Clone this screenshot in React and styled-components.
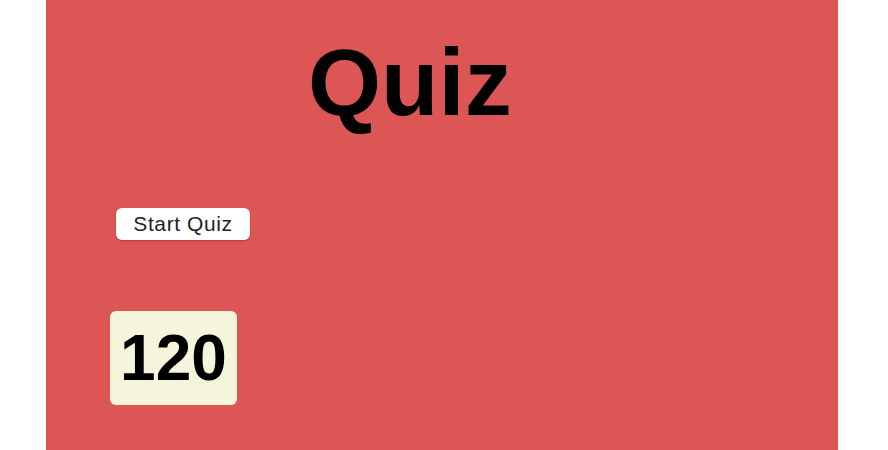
import React from "react";
import styled, { createGlobalStyle } from "styled-components";

const GlobalStyle = createGlobalStyle`
  html, body {
    margin: 0;
    padding: 0;
    background: #fff;
    font-family: "Liberation Sans", Arial, sans-serif;
  }
`;

const Page = styled.div`
  width: 792px;
  height: 450px;
  margin-left: 46px;
  background: #dd5656;
  overflow: hidden;
  display: flex;
  flex-direction: column;
`;

const Title = styled.h1`
  margin: 36px 0 0 262px;
  font-size: 94px;
  font-weight: 700;
  line-height: 1;
  color: #000;
`;

const StartButton = styled.button`
  align-self: flex-start;
  margin: 78px 0 0 70px;
  width: 134px;
  height: 32px;
  padding: 0;
  border: none;
  border-radius: 6px;
  background: #fff;
  color: #222;
  font-family: "Liberation Sans", Arial, sans-serif;
  font-size: 21px;
  letter-spacing: 0.6px;
  box-shadow: 0 1px 2px rgba(0, 0, 0, 0.25);
  cursor: pointer;
`;

const Counter = styled.div`
  align-self: flex-start;
  margin: 71px 0 0 64px;
  width: 127px;
  height: 94px;
  border-radius: 6px;
  background: #f5f5dc;
  display: flex;
  align-items: center;
  justify-content: center;
  font-size: 64px;
  font-weight: 700;
  color: #000;
`;

export default function App() {
  return (
    <>
      <GlobalStyle />
      <Page>
        <Title>Quiz</Title>
        <StartButton>Start Quiz</StartButton>
        <Counter>120</Counter>
      </Page>
    </>
  );
}
